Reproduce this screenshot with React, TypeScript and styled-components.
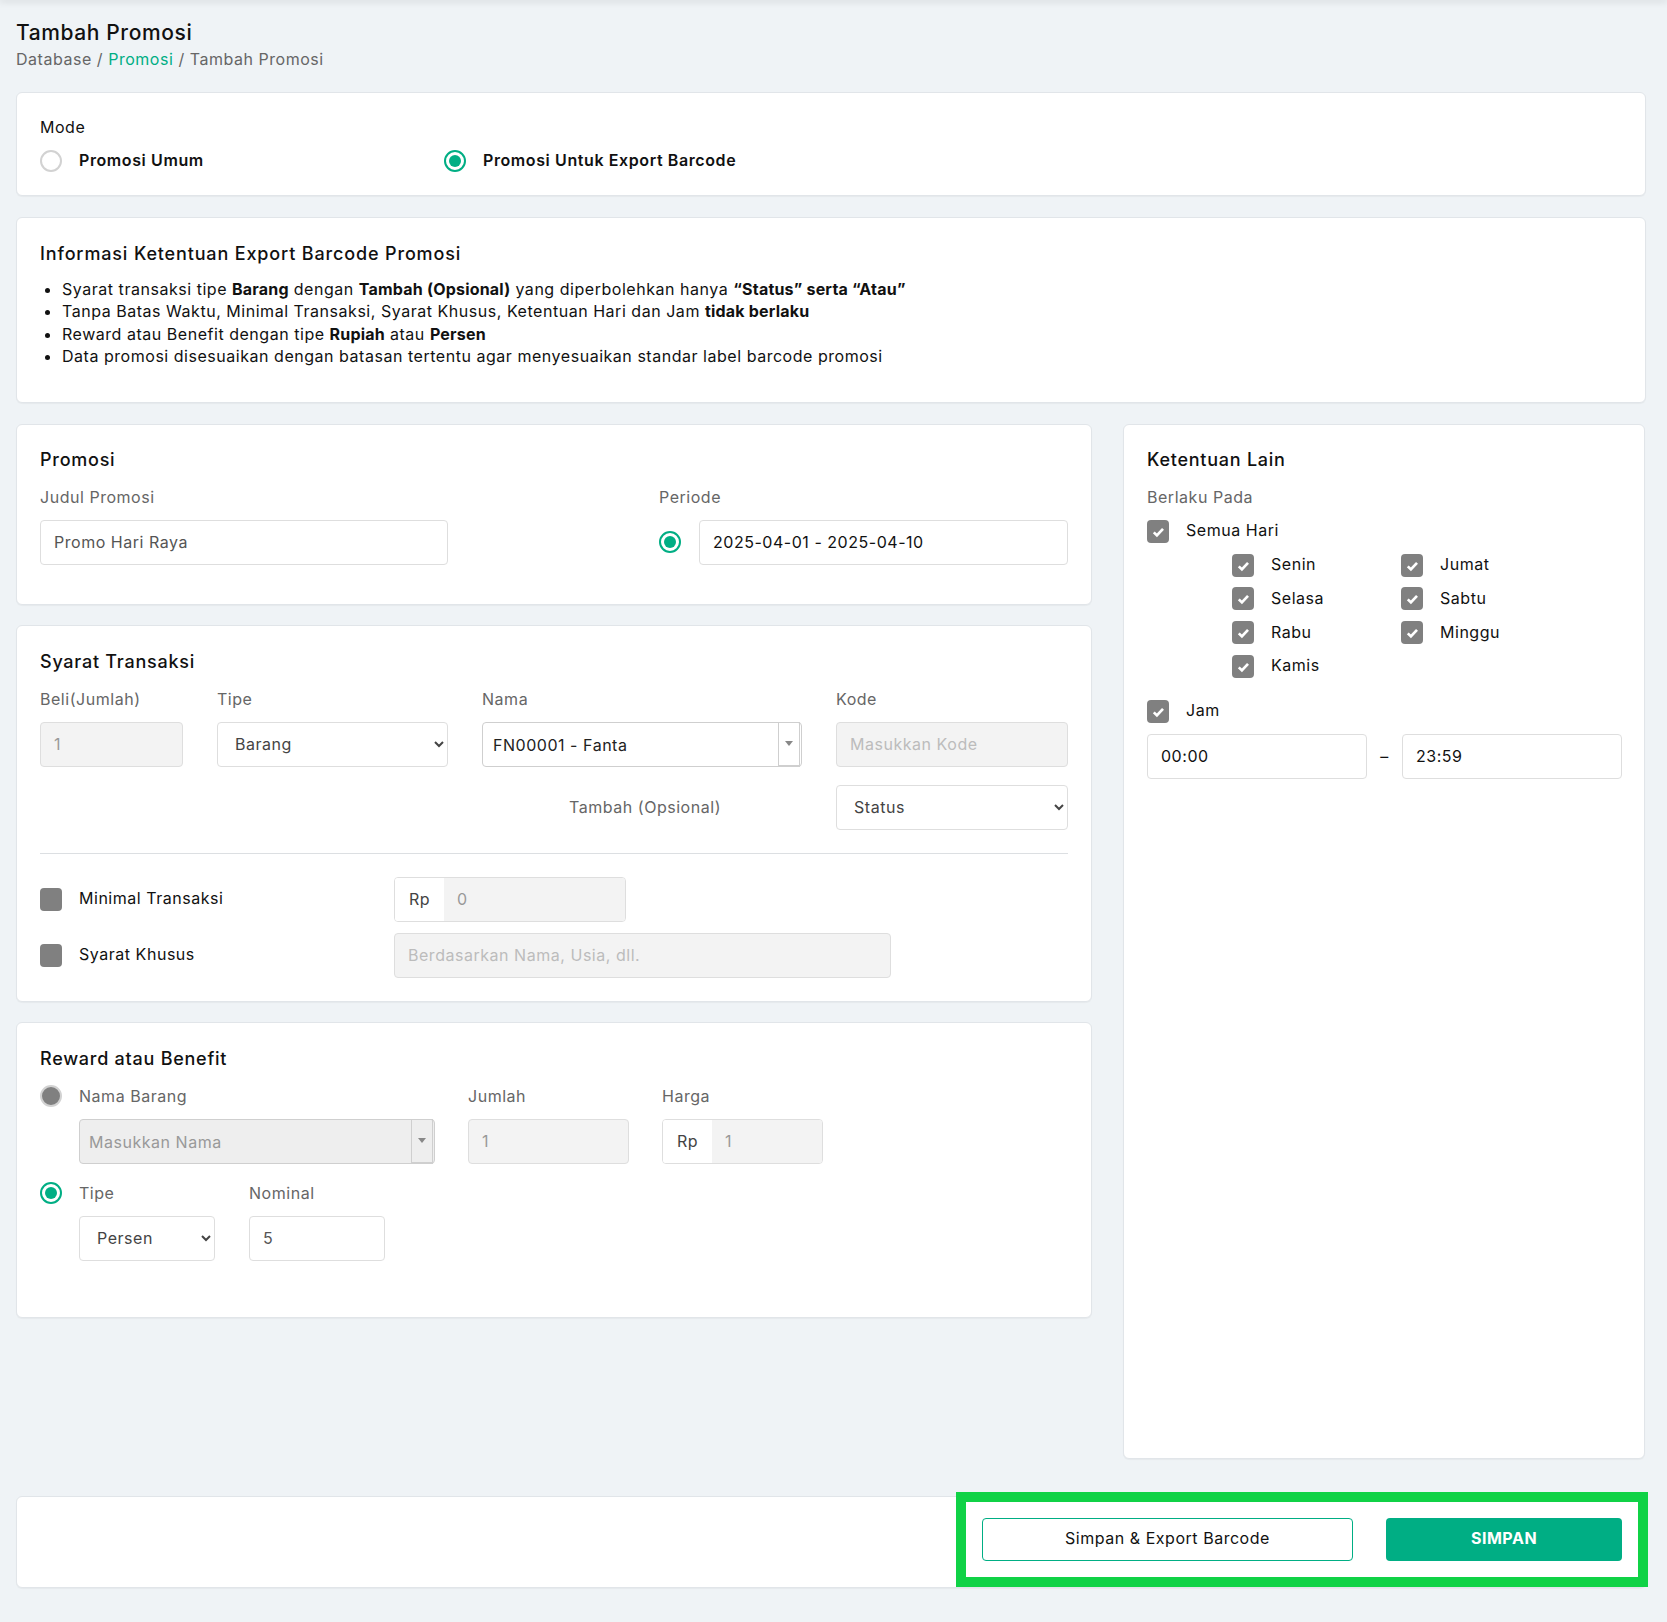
import React from 'react';
import styled, { createGlobalStyle } from 'styled-components';

const GlobalStyle = createGlobalStyle`
  * {
    box-sizing: border-box;
  }

  body {
    margin: 0;
    background: #eff3f6;
    color: #111;
    font-family: Inter, "Liberation Sans", sans-serif;
    font-size: 16px;
    line-height: 22px;
    letter-spacing: 0.53px;
  }

  input,
  select,
  button {
    font: inherit;
    letter-spacing: inherit;
  }
`;

const TopEdge = styled.div`
  height: 0;
  box-shadow: 0 0 7px 1px rgba(0, 0, 0, 0.22);
`;

const Page = styled.div`
  width: 1667px;
  height: 1622px;
  padding: 20px 21px 0 16px;
  overflow: hidden;
`;

const PageTitle = styled.h1`
  margin: 0;
  font-size: 21px;
  font-weight: 500;
  line-height: 26px;
  letter-spacing: 0.6px;
  color: #111;
`;

const Breadcrumb = styled.div`
  margin: 2px 0 22px;
  color: #666;
`;

const CrumbLink = styled.span`
  color: #00ae84;
`;

const Card = styled.section<{ $top?: number; $bottom?: number }>`
  background: #fff;
  border: 1px solid #e1e5e9;
  border-radius: 6px;
  box-shadow: 0 1px 1px rgba(0, 0, 0, 0.04);
  padding: ${({ $top = 23 }) => $top}px 23px ${({ $bottom = 23 }) => $bottom}px;
`;

const Stack = styled.div<{ $gap?: number }>`
  display: flex;
  flex-direction: column;
  gap: ${({ $gap = 20 }) => $gap}px;
`;

const PlainLabel = styled.div`
  margin-bottom: 12px;
`;

const ModeRow = styled.div`
  display: flex;
`;

const ModeOption = styled.div`
  display: flex;
  align-items: center;
  gap: 17px;
  width: 404px;
  font-weight: 600;
  letter-spacing: 0.6px;
`;

const OptionText = styled.span`
  margin-top: -2px;
`;

const Radio = styled.span<{ $state?: 'off' | 'on' | 'disabled' }>`
  flex: none;
  display: flex;
  align-items: center;
  justify-content: center;
  width: 22px;
  height: 22px;
  border-radius: 50%;
  border: 2px solid
    ${({ $state }) => ($state === 'on' ? '#00ae84' : '#d2d2d2')};
  background: ${({ $state }) => ($state === 'disabled' ? '#808080' : '#fff')};

  &::after {
    content: '';
    display: ${({ $state }) => ($state === 'on' ? 'block' : 'none')};
    width: 12px;
    height: 12px;
    border-radius: 50%;
    background: #00ae84;
  }
`;

const InfoTitle = styled.h2`
  margin: 0 0 12px;
  font-size: 18px;
  font-weight: 500;
  line-height: 24px;
  letter-spacing: 0.85px;
  color: #111;
`;

const InfoList = styled.ul`
  margin: 0 0 12px;
  padding-left: 22px;
  line-height: 22.4px;

  b {
    font-weight: 700;
    letter-spacing: 0.2px;
  }
`;

const Columns = styled.div`
  display: grid;
  grid-template-columns: 1076px 522px;
  gap: 31px;
  min-height: 1035px;
`;

const SectionTitle = styled.h2`
  margin: 0 0 14px;
  font-size: 18px;
  font-weight: 500;
  line-height: 24px;
  letter-spacing: 0.75px;
  color: #111;
`;

const FieldLabel = styled.label`
  display: block;
  margin-bottom: 12px;
  color: #666;
`;

const Row = styled.div<{ $gap?: number }>`
  display: flex;
  gap: ${({ $gap = 0 }) => $gap}px;
`;

const PeriodRow = styled.div`
  display: flex;
  align-items: center;
  gap: 18px;
`;

const Field = styled.div<{ $width?: number; $grow?: boolean; $offset?: number }>`
  width: ${({ $width }) => ($width ? `${$width}px` : 'auto')};
  flex: ${({ $grow }) => ($grow ? '1' : 'none')};
  margin-left: ${({ $offset = 0 }) => $offset}px;
`;

const controlStyles = `
  display: block;
  width: 100%;
  height: 45px;
  padding: 0 13px;
  background: #fff;
  border: 1px solid #dedede;
  border-radius: 4px;
  outline: none;
`;

const Input = styled.input<{ $strong?: boolean }>`
  ${controlStyles}
  color: ${({ $strong }) => ($strong ? '#111' : '#555')};

  &:disabled {
    background: #f3f3f3;
    color: #999;
  }

  &::placeholder {
    color: #bcbcbc;
    opacity: 1;
  }
`;

const Select = styled.select`
  ${controlStyles}
  color: #444;
  cursor: pointer;
`;

const ComboBox = styled.div<{ $disabled?: boolean }>`
  display: flex;
  align-items: center;
  height: 45px;
  padding-left: ${({ $disabled }) => ($disabled ? 9 : 10)}px;
  border: 1px solid #cfcfcf;
  border-radius: 4px;
  background: ${({ $disabled }) => ($disabled ? '#eeeeee' : '#fff')};
  color: ${({ $disabled }) => ($disabled ? '#999' : '#222')};
`;

const ComboText = styled.span`
  flex: 1;
  padding-top: 2px;
`;

const ComboArrow = styled.span`
  display: flex;
  align-items: center;
  justify-content: center;
  flex: none;
  align-self: flex-start;
  width: 22px;
  height: 45px;
  margin-top: -1px;
  margin-right: 1px;
  border: 1px solid #cfcfcf;
  border-bottom-width: 2px;

  &::after {
    content: '';
    border-left: 4px solid transparent;
    border-right: 4px solid transparent;
    border-top: 5px solid #888;
  }
`;

const MoneyBox = styled.div`
  display: flex;
  height: 45px;
  border: 1px solid #dedede;
  border-radius: 4px;
  overflow: hidden;
`;

const MoneyPrefix = styled.span`
  display: flex;
  align-items: center;
  justify-content: center;
  flex: none;
  width: 49px;
  background: #fff;
  color: #444;
`;

const MoneyValue = styled.input`
  flex: 1;
  min-width: 0;
  padding: 0 13px;
  border: 0;
  background: #f3f3f3;
  color: #999;
`;

const TransactionGrid = styled.div`
  display: grid;
  grid-template-columns: 143px 231px 320px 1fr;
  column-gap: 34px;
`;

const ExtraRow = styled.div`
  display: flex;
  justify-content: flex-end;
  align-items: center;
  gap: 115px;
  margin-top: 18px;
`;

const ExtraLabel = styled.span`
  color: #666;
`;

const Divider = styled.hr`
  margin: 23px 0;
  border: 0;
  border-top: 1px solid #dcdfe2;
`;

const ToggleRow = styled.div`
  display: flex;
  align-items: center;
  margin-top: 11px;

  &:first-of-type {
    margin-top: 0;
  }
`;

const ToggleName = styled.div`
  display: flex;
  align-items: center;
  gap: 17px;
  width: 354px;
`;

const Box = styled.span`
  flex: none;
  display: flex;
  align-items: center;
  justify-content: center;
  width: 22px;
  height: 23px;
  border-radius: 4px;
  background: #808080;
`;

const Check = () => (
  <svg width="13" height="13" viewBox="0 0 13 13" fill="none">
    <path d="M1.8 7.4 4.9 10.4 11 3.8" stroke="#fff" strokeWidth="2.7" />
  </svg>
);

const RewardOption = styled.div<{ $last?: boolean }>`
  display: flex;
  gap: 17px;
  margin-bottom: ${({ $last }) => ($last ? 56 : 18)}px;
`;

const SideCheck = styled.div`
  display: flex;
  align-items: center;
  gap: 17px;
`;

const DayGrid = styled.div`
  display: grid;
  grid-template-columns: 169px auto;
  grid-template-rows: repeat(4, 23px);
  grid-auto-flow: column;
  row-gap: 10.7px;
  justify-content: start;
  margin: 11px 0 22px 85px;
`;

const TimeRow = styled.div`
  display: flex;
  align-items: center;
  margin: 11px -1px 0 0;
`;

const TimeDash = styled.span`
  flex: none;
  width: 35px;
  text-align: center;
`;

const Footer = styled.div`
  display: flex;
  justify-content: flex-end;
  height: 92px;
  margin-top: 16px;
  background: #fff;
  border: 1px solid #e1e5e9;
  border-radius: 6px;
  box-shadow: 0 1px 1px rgba(0, 0, 0, 0.04);
`;

const ActionBox = styled.div`
  display: flex;
  gap: 33px;
  width: 692px;
  height: 95px;
  margin: -5px -3px 0 0;
  padding: 16px;
  border: 10px solid #10d246;
  background: #fff;
`;

const OutlineButton = styled.button`
  width: 371px;
  height: 43px;
  padding: 0 0 2px;
  background: #fff;
  border: 1px solid #00ae84;
  border-radius: 4px;
  color: #111;
  cursor: pointer;
`;

const SaveButton = styled.button`
  width: 236px;
  height: 43px;
  padding: 0 0 2px;
  background: #00ae84;
  border: 0;
  border-radius: 4px;
  color: #fff;
  font-weight: 700;
  cursor: pointer;
`;

const Combo: React.FC<{ text: string; disabled?: boolean }> = ({ text, disabled }) => (
  <ComboBox $disabled={disabled}>
    <ComboText>{text}</ComboText>
    <ComboArrow />
  </ComboBox>
);

const Money: React.FC<{ value: string }> = ({ value }) => (
  <MoneyBox>
    <MoneyPrefix>Rp</MoneyPrefix>
    <MoneyValue disabled value={value} readOnly />
  </MoneyBox>
);

const Checked: React.FC<{ label: string }> = ({ label }) => (
  <SideCheck>
    <Box>
      <Check />
    </Box>
    <OptionText>{label}</OptionText>
  </SideCheck>
);

const days = ['Senin', 'Selasa', 'Rabu', 'Kamis', 'Jumat', 'Sabtu', 'Minggu'];

const App: React.FC = () => {
  return (
    <>
      <GlobalStyle />
      <TopEdge />
      <Page>
        <PageTitle>Tambah Promosi</PageTitle>
        <Breadcrumb>
          Database / <CrumbLink>Promosi</CrumbLink> / Tambah Promosi
        </Breadcrumb>

        <Stack $gap={21}>
          <Card>
            <PlainLabel>Mode</PlainLabel>
            <ModeRow>
              <ModeOption>
                <Radio />
                <OptionText>Promosi Umum</OptionText>
              </ModeOption>
              <ModeOption>
                <Radio $state="on" />
                <OptionText>Promosi Untuk Export Barcode</OptionText>
              </ModeOption>
            </ModeRow>
          </Card>

          <Card $top={24} $bottom={22}>
            <InfoTitle>Informasi Ketentuan Export Barcode Promosi</InfoTitle>
            <InfoList>
              <li>
                Syarat transaksi tipe <b>Barang</b> dengan <b>Tambah (Opsional)</b> yang
                diperbolehkan hanya <b>“Status” serta “Atau”</b>
              </li>
              <li>
                Tanpa Batas Waktu, Minimal Transaksi, Syarat Khusus, Ketentuan Hari dan Jam{' '}
                <b>tidak berlaku</b>
              </li>
              <li>
                Reward atau Benefit dengan tipe <b>Rupiah</b> atau <b>Persen</b>
              </li>
              <li>
                Data promosi disesuaikan dengan batasan tertentu agar menyesuaikan standar
                label barcode promosi
              </li>
            </InfoList>
          </Card>

          <Columns>
            <Stack>
              <Card $bottom={39}>
                <SectionTitle>Promosi</SectionTitle>
                <Row>
                  <Field $width={408}>
                    <FieldLabel>Judul Promosi</FieldLabel>
                    <Input defaultValue="Promo Hari Raya" />
                  </Field>
                  <Field $grow $offset={211}>
                    <FieldLabel>Periode</FieldLabel>
                    <PeriodRow>
                      <Radio $state="on" />
                      <Input $strong defaultValue="2025-04-01 - 2025-04-10" />
                    </PeriodRow>
                  </Field>
                </Row>
              </Card>

              <Card $top={24}>
                <SectionTitle>Syarat Transaksi</SectionTitle>
                <TransactionGrid>
                  <Field>
                    <FieldLabel>Beli(Jumlah)</FieldLabel>
                    <Input disabled value="1" readOnly />
                  </Field>
                  <Field>
                    <FieldLabel>Tipe</FieldLabel>
                    <Select defaultValue="Barang">
                      <option>Barang</option>
                    </Select>
                  </Field>
                  <Field>
                    <FieldLabel>Nama</FieldLabel>
                    <Combo text="FN00001 - Fanta" />
                  </Field>
                  <Field>
                    <FieldLabel>Kode</FieldLabel>
                    <Input disabled placeholder="Masukkan Kode" />
                  </Field>
                </TransactionGrid>
                <ExtraRow>
                  <ExtraLabel>Tambah (Opsional)</ExtraLabel>
                  <Field $width={232}>
                    <Select defaultValue="Status">
                      <option>Status</option>
                    </Select>
                  </Field>
                </ExtraRow>
                <Divider />
                <ToggleRow>
                  <ToggleName>
                    <Box />
                    <OptionText>Minimal Transaksi</OptionText>
                  </ToggleName>
                  <Field $width={232}>
                    <Money value="0" />
                  </Field>
                </ToggleRow>
                <ToggleRow>
                  <ToggleName>
                    <Box />
                    <OptionText>Syarat Khusus</OptionText>
                  </ToggleName>
                  <Field $width={497}>
                    <Input disabled placeholder="Berdasarkan Nama, Usia, dll." />
                  </Field>
                </ToggleRow>
              </Card>

              <Card $top={24} $bottom={0}>
                <SectionTitle>Reward atau Benefit</SectionTitle>
                <RewardOption>
                  <Radio $state="disabled" />
                  <Row $gap={33}>
                    <Field $width={356}>
                      <FieldLabel>Nama Barang</FieldLabel>
                      <Combo text="Masukkan Nama" disabled />
                    </Field>
                    <Field $width={161}>
                      <FieldLabel>Jumlah</FieldLabel>
                      <Input disabled value="1" readOnly />
                    </Field>
                    <Field $width={161}>
                      <FieldLabel>Harga</FieldLabel>
                      <Money value="1" />
                    </Field>
                  </Row>
                </RewardOption>
                <RewardOption $last>
                  <Radio $state="on" />
                  <Row $gap={34}>
                    <Field $width={136}>
                      <FieldLabel>Tipe</FieldLabel>
                      <Select defaultValue="Persen">
                        <option>Persen</option>
                      </Select>
                    </Field>
                    <Field $width={136}>
                      <FieldLabel>Nominal</FieldLabel>
                      <Input defaultValue="5" />
                    </Field>
                  </Row>
                </RewardOption>
              </Card>
            </Stack>

            <Card>
              <SectionTitle>Ketentuan Lain</SectionTitle>
              <FieldLabel>Berlaku Pada</FieldLabel>
              <Checked label="Semua Hari" />
              <DayGrid>
                {days.map((day) => (
                  <Checked key={day} label={day} />
                ))}
              </DayGrid>
              <Checked label="Jam" />
              <TimeRow>
                <Input $strong defaultValue="00:00" />
                <TimeDash>–</TimeDash>
                <Input $strong defaultValue="23:59" />
              </TimeRow>
            </Card>
          </Columns>

          <Footer>
            <ActionBox>
              <OutlineButton>Simpan &amp; Export Barcode</OutlineButton>
              <SaveButton>SIMPAN</SaveButton>
            </ActionBox>
          </Footer>
        </Stack>
      </Page>
    </>
  );
};

export default App;
